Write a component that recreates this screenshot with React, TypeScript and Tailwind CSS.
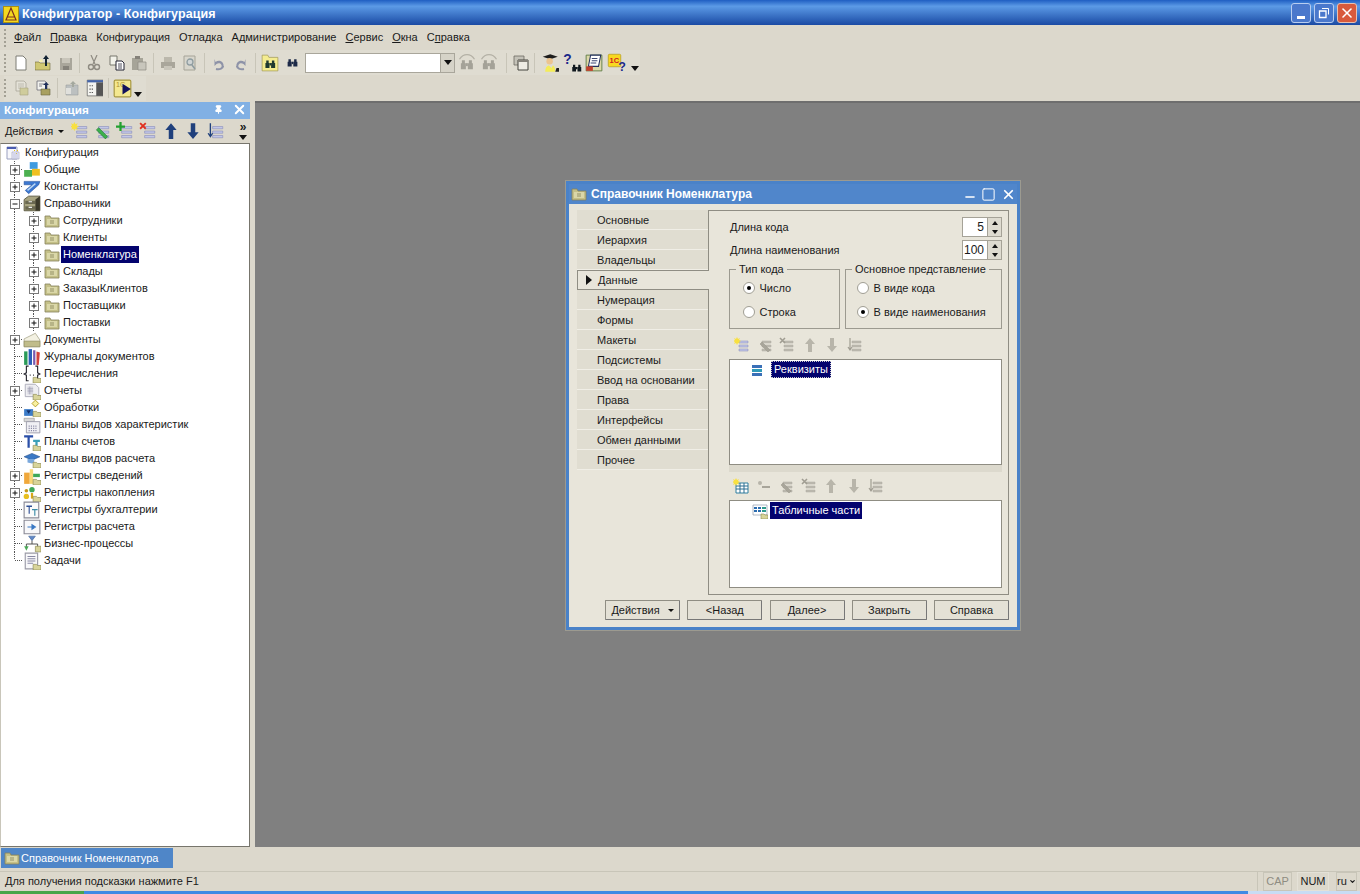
import React from "react";
import { ChevronDown, Minus, Pin, Square, X } from "lucide-react";

type IconProps = { children: React.ReactNode; size?: number };

const Ic = ({ children, size = 16 }: IconProps) => (
  <svg width={size} height={size} viewBox="0 0 16 16" className="shrink-0">
    {children}
  </svg>
);

// small olive folder that sits in the corner of the tree icons
const Corner = () => (
  <g>
    <path d="M9 11h3l1 1h3v4H9z" fill="#d8d49a" stroke="#8d8a52" strokeWidth=".6" />
  </g>
);

const FolderIcon = () => (
  <Ic>
    <path d="M1 3h5l1 2h8v9H1z" fill="#c4c088" stroke="#85825a" strokeWidth=".8" />
    <path d="M3 7h10M3 9h10M3 11h10" stroke="#f0eec8" strokeWidth="1" />
    <path d="M6 8h4M6 10h4" stroke="#77744c" strokeWidth=".7" />
  </Ic>
);

const RootIcon = () => (
  <Ic>
    <path d="M2 2h10v12H2z" fill="#f7f7fb" stroke="#9aa0c0" />
    <path d="M2 2h9v2H2z" fill="#4a5cb0" />
    <path d="M7 7h7v7H7z" fill="#eef" stroke="#a0a0b8" strokeWidth=".6" />
    <path d="M9 5h1v1H9zM12 5h1v1h-1zM11 8h1v1h-1z" fill="#e6c020" />
    <path d="M8 9h5M8 11h5M8 13h5" stroke="#b0b4cc" strokeWidth=".8" />
  </Ic>
);

const CommonIcon = () => (
  <Ic>
    <path d="M6 1h7v6H6z" fill="#3f9be0" />
    <path d="M8 7h7v6H8z" fill="#f0c020" />
    <path d="M1 8h7v6H1z" fill="#4cb050" />
  </Ic>
);

const ConstIcon = () => (
  <Ic>
    <path d="M1 3h14l-1 3-9 8-3-3 6-5H1z" fill="#3c78d0" stroke="#24509a" strokeWidth=".5" />
    <path d="M4 11l7-6" stroke="#bcd8f4" strokeWidth="1.2" />
  </Ic>
);

const CabinetIcon = () => (
  <Ic>
    <path d="M5 1h10v13H1V4z" fill="#a8a480" stroke="#57553c" strokeWidth=".8" />
    <path d="M2 5h9v3H2zM2 10h9v3H2z" fill="#6a6850" />
    <path d="M11 4l4-3v13l-4 0z" fill="#3c3a2a" />
    <path d="M5 6h3M5 11h3" stroke="#eee" />
  </Ic>
);

const DocsIcon = () => (
  <Ic>
    <path d="M1 7l10-5 4 6v6H1z" fill="#f3f1e2" stroke="#a8a68c" strokeWidth=".7" />
    <path d="M1 9h14v5H1z" fill="#c0bc8a" stroke="#8e8b5e" strokeWidth=".6" />
  </Ic>
);

const JournalIcon = () => (
  <Ic>
    <path d="M1 3h3v12H1z" fill="#2a9a58" />
    <path d="M5 1h3v14H5z" fill="#2c5fb8" />
    <path d="M9 2h2v13H9z" fill="#7a5ab0" />
    <path d="M12 3l3 1-1 11h-2z" fill="#d2423c" />
  </Ic>
);

const EnumIcon = () => (
  <Ic>
    <path d="M5 1H3v6L1 8l2 1v5h2M11 1h2v6l2 1-2 1v5h-2" fill="none" stroke="#26262e" strokeWidth="1" />
    <path d="M6 9h.8M9 9h.8" stroke="#26262e" />
    <Corner />
  </Ic>
);

const ReportIcon = () => (
  <Ic>
    <path d="M2 2h9l3 3v8H2z" fill="#eeeef2" stroke="#aaaab8" strokeWidth=".8" />
    <path d="M4 4h5v7H4z" fill="#d4d4de" />
    <path d="M4 6h5M4 8h5M6 4v7" stroke="#9a9aae" strokeWidth=".6" />
    <Corner />
  </Ic>
);

const ProcessIcon = () => (
  <Ic>
    <path d="M11 1l3 3-3 3-3-3z" fill="#f8f0a0" stroke="#b09820" strokeWidth=".8" />
    <path d="M1 9h8v6H1z" fill="#3c7cc8" />
    <path d="M3 10h4l-2 3z" fill="#14306a" />
    <Corner />
  </Ic>
);

const CharIcon = () => (
  <Ic>
    <path d="M1 2h9v3H1z" fill="#d8d8d8" stroke="#9a9a9a" strokeWidth=".6" />
    <path d="M3 5h12v10H3z" fill="#f0f0f4" stroke="#9a9aa8" strokeWidth=".8" />
    <path d="M5 9h8M5 11h8M5 13h8" stroke="#8a8aa6" strokeDasharray="1 1" />
  </Ic>
);

const AccountIcon = () => (
  <Ic>
    <path d="M1 2h8v2H6v9H4V4H1z" fill="#2a4fa8" />
    <path d="M9 6h6v2h-2v4h-2V8H9z" fill="#3ba0b8" />
    <Corner />
  </Ic>
);

const CalcPlanIcon = () => (
  <Ic>
    <path d="M1 6l7-3 7 3-7 3z" fill="#3a78c4" stroke="#1f4a8a" strokeWidth=".5" />
    <path d="M4 8v3l4 1 2-1V8" fill="#7aa8dc" />
    <Corner />
  </Ic>
);

const InfoRegIcon = () => (
  <Ic>
    <path d="M1 5h5v10H1z" fill="#f0a83c" />
    <path d="M6 2h3v13H6z" fill="#f8d878" />
    <path d="M9 6h6v3H9z" fill="#3ea858" />
    <Corner />
  </Ic>
);

const AccumRegIcon = () => (
  <Ic>
    <circle cx="3" cy="11" r="2.4" fill="#e8c020" />
    <circle cx="8" cy="5" r="2.4" fill="#3ea858" />
    <circle cx="3" cy="6" r="1.6" fill="#c89a18" />
    <path d="M7 8h2v5H7z" fill="#d8a818" />
    <Corner />
  </Ic>
);

const BookRegIcon = () => (
  <Ic>
    <path d="M1 1h13v14H1z" fill="#fafafa" stroke="#8a8a96" />
    <path d="M3 4h5v1.4H6v6H5v-6H3z" fill="#2e4f96" />
    <path d="M8 7h5v1.2h-2v5h-1v-5H8z" fill="#3a8aa6" />
  </Ic>
);

const CalcRegIcon = () => (
  <Ic>
    <path d="M1 2h14v12H1z" fill="#f8f8fa" stroke="#8a8a96" />
    <path d="M4 8h4M8 6l3 2-3 2z" stroke="#3a78c4" fill="#3a78c4" strokeWidth="1" />
  </Ic>
);

const BizIcon = () => (
  <Ic>
    <path d="M5 1h6l-3 4z" fill="#5f88c8" stroke="#3c5c90" strokeWidth=".5" />
    <path d="M8 5v3M3 11V8h10v3" fill="none" stroke="#444" strokeWidth=".8" />
    <path d="M1 10h4l-2 4z" fill="#4caa58" />
    <path d="M11 10h5v5h-5z" fill="#d8d49a" stroke="#8d8a52" strokeWidth=".6" />
  </Ic>
);

const TaskIcon = () => (
  <Ic>
    <path d="M2 1h11v14H2z" fill="#f8f8fa" stroke="#9a9aa6" />
    <path d="M4 4h7M4 6h7M4 8h7M4 10h5" stroke="#7c7c9a" strokeWidth=".8" />
    <Corner />
  </Ic>
);

// dotted connectors and the +/- box on the left of a tree row
const Guide = ({ kind }: { kind: "plus" | "minus" | "line" | "end" | "pass" }) => (
  <svg width="18" height="17" viewBox="0 0 18 17" className="shrink-0">
    {kind !== "end" ? (
      <path d="M9.5 0V17" stroke="#555" strokeDasharray="1 1" />
    ) : (
      <path d="M9.5 0V8" stroke="#555" strokeDasharray="1 1" />
    )}
    {kind !== "pass" && <path d="M10 8.5H18" stroke="#555" strokeDasharray="1 1" />}
    {(kind === "plus" || kind === "minus") && (
      <g>
        <rect x="5.5" y="4.5" width="9" height="9" fill="#fff" stroke="#7a7a7a" />
        <path d="M7.5 9h5" stroke="#111" />
        {kind === "plus" && <path d="M10 6.5v5" stroke="#111" />}
      </g>
    )}
  </svg>
);

type Node = {
  label: string;
  icon: React.ReactNode;
  kind: "plus" | "minus" | "line" | "end";
  child?: boolean;
  selected?: boolean;
};

const treeNodes: Node[] = [
  { label: "Общие", icon: <CommonIcon />, kind: "plus" },
  { label: "Константы", icon: <ConstIcon />, kind: "plus" },
  { label: "Справочники", icon: <CabinetIcon />, kind: "minus" },
  { label: "Сотрудники", icon: <FolderIcon />, kind: "plus", child: true },
  { label: "Клиенты", icon: <FolderIcon />, kind: "plus", child: true },
  { label: "Номенклатура", icon: <FolderIcon />, kind: "plus", child: true, selected: true },
  { label: "Склады", icon: <FolderIcon />, kind: "plus", child: true },
  { label: "ЗаказыКлиентов", icon: <FolderIcon />, kind: "plus", child: true },
  { label: "Поставщики", icon: <FolderIcon />, kind: "plus", child: true },
  { label: "Поставки", icon: <FolderIcon />, kind: "plus", child: true },
  { label: "Документы", icon: <DocsIcon />, kind: "plus" },
  { label: "Журналы документов", icon: <JournalIcon />, kind: "line" },
  { label: "Перечисления", icon: <EnumIcon />, kind: "line" },
  { label: "Отчеты", icon: <ReportIcon />, kind: "plus" },
  { label: "Обработки", icon: <ProcessIcon />, kind: "line" },
  { label: "Планы видов характеристик", icon: <CharIcon />, kind: "line" },
  { label: "Планы счетов", icon: <AccountIcon />, kind: "line" },
  { label: "Планы видов расчета", icon: <CalcPlanIcon />, kind: "line" },
  { label: "Регистры сведений", icon: <InfoRegIcon />, kind: "plus" },
  { label: "Регистры накопления", icon: <AccumRegIcon />, kind: "plus" },
  { label: "Регистры бухгалтерии", icon: <BookRegIcon />, kind: "line" },
  { label: "Регистры расчета", icon: <CalcRegIcon />, kind: "line" },
  { label: "Бизнес-процессы", icon: <BizIcon />, kind: "line" },
  { label: "Задачи", icon: <TaskIcon />, kind: "end" },
];

// stacked list rows used by the panel and dialog toolbars
const Lines = ({ off }: { off?: boolean }) => (
  <path
    d="M5 4h9v2H5zM5 8h9v2H5zM5 12h9v2H5z"
    fill={off ? "#bdbab0" : "#c2c6e8"}
    stroke={off ? "#aeaba0" : "#8488b8"}
    strokeWidth=".5"
  />
);

const AddIcon = ({ off }: { off?: boolean }) => (
  <Ic>
    <Lines off={off} />
    <path d="M3 0l1 2 2-1-1 2 2 1-2 1 1 2-2-1-1 2-1-2-2 1 1-2-2-1 2-1-1-2 2 1z" fill="#f8e040" />
  </Ic>
);

const EditIcon = ({ off }: { off?: boolean }) => (
  <Ic>
    <Lines off={off} />
    <path d="M5 5l8 8-2 2-8-8z" fill={off ? "#a8a59a" : "#3cb04c"} stroke={off ? "#989588" : "#1c7030"} strokeWidth=".5" />
  </Ic>
);

const PlusListIcon = () => (
  <Ic>
    <Lines />
    <path d="M3 0h2v3h3v2H5v3H3V5H0V3h3z" fill="#22a030" />
  </Ic>
);

const DelIcon = ({ off }: { off?: boolean }) => (
  <Ic>
    <Lines off={off} />
    <path d="M1 1l5 5M6 1L1 6" stroke={off ? "#a09d92" : "#e03020"} strokeWidth="1.6" />
  </Ic>
);

const UpIcon = ({ off }: { off?: boolean }) => (
  <Ic>
    <path d="M8 1l5 6h-3v8H6V7H3z" fill={off ? "#b8b5aa" : "#20407c"} />
  </Ic>
);

const DownIcon = ({ off }: { off?: boolean }) => (
  <Ic>
    <path d="M8 15l5-6h-3V1H6v8H3z" fill={off ? "#b8b5aa" : "#20407c"} />
  </Ic>
);

const SortIcon = ({ off }: { off?: boolean }) => (
  <Ic>
    <Lines off={off} />
    <path d="M3 1v11M1 10l2 3 2-3" fill="none" stroke={off ? "#a09d92" : "#20407c"} strokeWidth="1.2" />
  </Ic>
);

const Binoculars = ({ color = "#26323c" }: { color?: string }) => (
  <g fill={color}>
    <path d="M3 4h3v3h1v6H2V7h1zM10 4h3v3h1v6H9V7h1z" />
    <path d="M7 7h2v3H7z" />
  </g>
);

const gray = "#a9a69b";

const toolbarIcons: Record<string, React.ReactNode> = {
  new: (
    <Ic>
      <path d="M3 1h7l3 3v11H3z" fill="#fff" stroke="#7c7c74" />
    </Ic>
  ),
  open: (
    <Ic>
      <path d="M0 7h4l1 1h10v7H0z" fill="#cfc772" stroke="#6e6a3c" strokeWidth=".6" />
      <path d="M0 7h4V5l3-1 1 3z" fill="#f4eeb0" />
      <path d="M11 0l3 4h-2v7h-2V4H8z" fill="#123" />
    </Ic>
  ),
  save: (
    <Ic>
      <path d="M2 3h12v12H2z" fill={gray} />
      <path d="M4 3h8v5H4z" fill="#c8c5ba" />
      <path d="M5 11h6v4H5z" fill="#85827a" />
    </Ic>
  ),
  cut: (
    <Ic>
      <path d="M5 0l4 9M11 0L7 9" stroke="#8e8b82" strokeWidth="1.2" />
      <circle cx="5" cy="12" r="2.5" fill="none" stroke="#8e8b82" strokeWidth="1.4" />
      <circle cx="11" cy="12" r="2.5" fill="none" stroke="#8e8b82" strokeWidth="1.4" />
    </Ic>
  ),
  copy: (
    <Ic>
      <path d="M1 1h7v9H1z" fill="#f2f2ea" stroke="#77776c" />
      <path d="M7 6h6l2 2v7H7z" fill="#fff" stroke="#223" />
      <path d="M9 9h4M9 11h4M9 13h4" stroke="#223" strokeWidth=".8" />
    </Ic>
  ),
  paste: (
    <Ic>
      <path d="M1 3h11v12H1z" fill="#a6a498" />
      <path d="M4 1h5v3H4z" fill="#85827a" />
      <path d="M7 7h8v8H7z" fill="#c8c6bc" stroke="#8e8b82" strokeWidth=".7" />
    </Ic>
  ),
  print: (
    <Ic>
      <path d="M4 2h8v5H4z" fill="#bbb8ac" />
      <path d="M1 7h14v6H1z" fill={gray} />
      <path d="M4 11h8v4H4z" fill="#c8c5ba" />
    </Ic>
  ),
  preview: (
    <Ic>
      <path d="M2 1h11v14H2z" fill="#d8d6cc" stroke="#a6a498" />
      <circle cx="8" cy="7" r="3" fill="#cfd4d4" stroke="#8e9ca0" strokeWidth="1.3" />
      <path d="M10 10l3 4" stroke="#8e9ca0" strokeWidth="1.6" />
    </Ic>
  ),
  undo: (
    <Ic>
      <path d="M4 3v7l2-2c3-2 6 0 5 4l2-1c1-5-4-8-8-5L4 3z" fill="#8e93a8" transform="translate(-.5 1)" />
      <path d="M5 14c4 1 7-1 7-3" stroke="#8e93a8" strokeWidth="2" fill="none" />
    </Ic>
  ),
  redo: (
    <Ic>
      <path d="M12 3v7l-2-2c-3-2-6 0-5 4l-2-1c-1-5 4-8 8-5l1-3z" fill="#8e93a8" transform="translate(.5 1)" />
      <path d="M11 14c-4 1-7-1-7-3" stroke="#8e93a8" strokeWidth="2" fill="none" />
    </Ic>
  ),
  find: (
    <Ic size={18}>
      <path d="M1 1h5l1 2h8v12H1z" fill="#f4ec90" stroke="#9c9450" strokeWidth=".6" />
      <g transform="translate(2.5 3) scale(.72)">
        <Binoculars color="#1f3a30" />
      </g>
    </Ic>
  ),
  bino: (
    <Ic size={13}>
      <Binoculars color="#1d2a48" />
    </Ic>
  ),
  nextB: (
    <Ic size={20}>
      <path d="M2 5c3-5 9-5 12 0" fill="none" stroke="#b4b1a6" />
      <g transform="translate(1.5 2.5) scale(.8)">
        <Binoculars color="#a4a298" />
      </g>
    </Ic>
  ),
  win: (
    <Ic>
      <path d="M1 1h10v9H1z" fill="#c4c2b8" stroke="#6c6a62" strokeWidth=".8" />
      <path d="M5 5h10v10H5z" fill="#eeece4" stroke="#44443e" />
      <path d="M5 5h10v2H5z" fill="#85827a" />
    </Ic>
  ),
  prof: (
    <Ic size={20}>
      <path d="M3 3l6-2 6 2-6 2z" fill="#1e1e1e" />
      <circle cx="8.5" cy="6.5" r="2.6" fill="#ecc490" />
      <path d="M5 15c0-4 2-5 3-5l2 2 1-2c1 0 2 2 2 5z" fill="#f4ec58" />
      <path d="M13 15h3v-3h-2z" fill="#222" />
    </Ic>
  ),
  helpFind: (
    <Ic size={20}>
      <text x="1" y="9" fontSize="11" fontWeight="700" fill="#1c2a8a" fontFamily="Liberation Sans">?</text>
      <g transform="translate(7 7) scale(.6)">
        <Binoculars color="#10181e" />
      </g>
    </Ic>
  ),
  book: (
    <Ic size={18}>
      <path d="M1 1h14v14H1z" fill="#dcd8a8" stroke="#5c7a44" strokeWidth=".8" />
      <path d="M5 1h9l-2 10H3z" fill="#fff" stroke="#233060" strokeWidth=".9" />
      <path d="M6 4h5M6 6h5M5 8h5" stroke="#233060" strokeWidth=".8" />
      <path d="M1 11h6v4H1z" fill="#c0402c" />
    </Ic>
  ),
  oneC: (
    <Ic size={20}>
      <rect x="1" y="1" width="10" height="10" rx="1" fill="#f8d820" stroke="#a89018" strokeWidth=".5" />
      <text x="2" y="8" fontSize="6" fontWeight="700" fill="#d02020" fontFamily="Liberation Sans">1C</text>
      <text x="9" y="14" fontSize="10" fontWeight="700" fill="#1c2a8a" fontFamily="Liberation Sans">?</text>
    </Ic>
  ),
  t1: (
    <Ic>
      <path d="M3 1h8l2 2v8H3z" fill="#e4e2d8" stroke="#a8a69a" strokeWidth=".8" />
      <path d="M5 4h6M5 6h6M5 8h3" stroke="#b4b2a6" strokeWidth=".8" />
      <path d="M7 8h8v7H7z" fill="#cfcc9c" stroke="#a4a280" strokeWidth=".6" />
    </Ic>
  ),
  t2: (
    <Ic>
      <path d="M2 1h8l2 2v7H2z" fill="#f2f2ee" stroke="#6c6c76" strokeWidth=".8" />
      <path d="M4 4h5M4 6h3" stroke="#6c6c76" strokeWidth=".8" />
      <path d="M6 9h9v6H6z" fill="#a8a060" stroke="#6a6640" strokeWidth=".6" />
      <path d="M11 2l3 3h-2v4h-2V5H8z" fill="#20305c" />
    </Ic>
  ),
  t3: (
    <Ic>
      <path d="M2 5h12v10H2z" fill="#bcc0c0" stroke="#9a9e9e" strokeWidth=".6" />
      <path d="M2 8h5v6H2z" fill="#e0e0dc" />
      <path d="M9 1l3 3h-2v3H8V4H6z" fill="#a4a89e" />
    </Ic>
  ),
  t4: (
    <Ic size={18}>
      <path d="M2 1h14v14H2z" fill="#f4f4f0" stroke="#555" strokeWidth=".6" />
      <path d="M2 1h14v2H2z" fill="#4464a8" />
      <path d="M10 3h6v12h-6z" fill="#555" />
      <path d="M4 6h4M4 9h4M4 12h4" stroke="#444" strokeDasharray="1 1" />
    </Ic>
  ),
  run: (
    <Ic size={19}>
      <rect x="1" y="1" width="14" height="14" rx="1" fill="#f4e890" stroke="#a89840" />
      <text x="2.5" y="7" fontSize="6" fill="#b09030" fontFamily="Liberation Sans">1C</text>
      <path d="M8 4l7 4.5-7 4.5z" fill="#14145c" />
    </Ic>
  ),
};

const Grip = () => (
  <div className="w-[3px] h-[18px] border-l-2 border-dotted border-[#a3a094] shrink-0" />
);

const Sep = () => <div className="w-px h-[20px] mx-[2.5px] bg-[#c8c5b8] shrink-0" />;

const Tool = ({ name }: { name: string }) => (
  <div className="w-[22.5px] h-[24px] flex items-center justify-center shrink-0">{toolbarIcons[name]}</div>
);

const TinyArrow = () => (
  <svg width="8" height="5" viewBox="0 0 8 5" className="shrink-0">
    <path d="M0 0h8L4 5z" fill="#111" />
  </svg>
);

const PanelTool = ({ children }: { children: React.ReactNode }) => (
  <div className="w-[22.75px] flex justify-center [&>svg]:w-[18px] [&>svg]:h-[18px]">{children}</div>
);

const DlgTool = ({ children }: { children: React.ReactNode }) => (
  <div className="w-[22.5px] flex justify-center">{children}</div>
);

const menus: [string, string, string][] = [
  ["", "Ф", "айл"],
  ["", "П", "равка"],
  ["Конфигурация", "", ""],
  ["Отладка", "", ""],
  ["Администрирование", "", ""],
  ["", "С", "ервис"],
  ["", "О", "кна"],
  ["С", "п", "равка"],
];

const sections = [
  "Основные",
  "Иерархия",
  "Владельцы",
  "Данные",
  "Нумерация",
  "Формы",
  "Макеты",
  "Подсистемы",
  "Ввод на основании",
  "Права",
  "Интерфейсы",
  "Обмен данными",
  "Прочее",
];

const Spin = ({ value }: { value: string }) => (
  <div className="w-[40px] h-[20px] flex border border-[#a5a297] bg-white">
    <div className="flex-1 flex items-center justify-end pr-[3px] text-[12px]">{value}</div>
    <div className="w-[14px] flex flex-col bg-[#dedbd0] border-l border-[#a5a297]">
      <div className="flex-1 flex items-center justify-center">
        <svg width="6" height="4" viewBox="0 0 6 4">
          <path d="M0 4h6L3 0z" fill="#111" />
        </svg>
      </div>
      <div className="flex-1 flex items-center justify-center">
        <svg width="6" height="4" viewBox="0 0 6 4">
          <path d="M0 0h6L3 4z" fill="#111" />
        </svg>
      </div>
    </div>
  </div>
);

const Radio = ({ label, checked }: { label: string; checked?: boolean }) => (
  <div className="flex items-center h-[24px]">
    <div className="w-[12px] h-[12px] rounded-full bg-white border border-[#a09e94] flex items-center justify-center shrink-0">
      {checked && <div className="w-[4px] h-[4px] rounded-full bg-black" />}
    </div>
    <span className="ml-[4.5px]">{label}</span>
  </div>
);

const Group = ({ title, className, children }: { title: string; className: string; children: React.ReactNode }) => (
  <div className={"relative h-[60px] border border-[#9c9a90] pt-[6px] " + className}>
    <span className="absolute -top-[8px] left-[6px] px-[3px] bg-[#e8e5da] leading-[14px]">{title}</span>
    {children}
  </div>
);

const DlgButton = ({ label, arrow }: { label: string; arrow?: boolean }) => (
  <div className="w-[75px] h-[20px] flex items-center justify-center gap-[8px] bg-[#e4e1d6] border border-[#8f8d83] border-b-[#777] border-r-[#777] rounded-[1px]">
    <span>{label}</span>
    {arrow && (
      <svg width="6" height="3" viewBox="0 0 6 3">
        <path d="M0 0h6L3 3z" fill="#111" />
      </svg>
    )}
  </div>
);

const Picked = ({ label, dotted }: { label: string; dotted?: boolean }) => (
  <span
    className={
      "h-[17px] px-[2px] flex items-center bg-[#03036e] text-white " + (dotted ? "border border-dotted border-[#c8c8c8]" : "")
    }
  >
    {label}
  </span>
);

export default function App() {
  return (
    <div className="h-[894px] w-[1360px] overflow-hidden flex flex-col bg-[#dcd8cc] text-[11px] text-[#1a1a1a] font-['Liberation_Sans',sans-serif]">
      {/* title bar */}
      <div className="h-[25px] shrink-0 flex items-center pl-[3px] pr-[3px] bg-gradient-to-b from-[#1f5ec2] via-[#5c9ae6] via-25% to-[#1b4aa4]">
        <svg width="16" height="17" viewBox="0 0 16 17" className="shrink-0 mt-[3px]">
          <rect x=".5" y=".5" width="15" height="16" fill="#f4d820" stroke="#a89018" />
          <path d="M8 2L3 14h10zM4 11h8" fill="none" stroke="#7a3020" strokeWidth="1.2" />
        </svg>
        <span className="ml-[3px] mt-[3px] text-[12.5px] font-bold text-white tracking-[0.1px]">Конфигуратор - Конфигурация</span>
        <div className="ml-auto flex gap-[3px]">
          <div className="w-[20px] h-[20px] rounded-[3px] border border-[#b8cdf0] bg-[#4a78cc] flex items-end justify-center pb-[3px]">
            <div className="w-[8px] h-[3px] bg-white" />
          </div>
          <div className="w-[20px] h-[20px] rounded-[3px] border border-[#b8cdf0] bg-[#4a78cc] flex items-center justify-center">
            <svg width="12" height="12" viewBox="0 0 12 12">
              <path d="M4 1.5h6.5v6" fill="none" stroke="#fff" />
              <path d="M1.5 4h6.5v6.5H1.5z" fill="none" stroke="#fff" strokeWidth="1.3" />
            </svg>
          </div>
          <div className="w-[20px] h-[20px] rounded-[3px] border border-[#e8c0b0] bg-[#d85a3c] flex items-center justify-center">
            <X size={16} strokeWidth={2.4} color="#fff" />
          </div>
        </div>
      </div>

      {/* menu */}
      <div className="h-[25px] shrink-0 flex items-center pl-[4px]">
        <Grip />
        <div className="flex gap-[9px] ml-[7px]">
          {menus.map(([a, b, c]) => (
            <span key={a + b + c}>
              {a}
              {b && <span className="underline">{b}</span>}
              {c}
            </span>
          ))}
        </div>
      </div>

      {/* toolbars */}
      <div className="h-[25px] shrink-0 flex items-center pl-[4px] w-[640px] bg-[#dfdcd1]">
        <Grip />
        <div className="w-[2.25px] shrink-0" />
        <Tool name="new" />
        <Tool name="open" />
        <Tool name="save" />
        <Sep />
        <Tool name="cut" />
        <Tool name="copy" />
        <Tool name="paste" />
        <Sep />
        <Tool name="print" />
        <Tool name="preview" />
        <Sep />
        <Tool name="undo" />
        <Tool name="redo" />
        <Sep />
        <Tool name="find" />
        <Tool name="bino" />
        <div className="ml-[2px] w-[150px] h-[20px] flex shrink-0 border border-[#a9a69b] bg-white">
          <div className="flex-1" />
          <div className="w-[14px] flex items-center justify-center bg-[#d6d3c8] border-l border-[#a9a69b]">
            <TinyArrow />
          </div>
        </div>
        <Tool name="nextB" />
        <Tool name="nextB" />
        <div className="w-[3px] shrink-0" />
        <Sep />
        <Tool name="win" />
        <Sep />
        <Tool name="prof" />
        <Tool name="helpFind" />
        <Tool name="book" />
        <Tool name="oneC" />
        <div className="mt-[12px] ml-[3px]">
          <TinyArrow />
        </div>
      </div>
      <div className="h-[26px] shrink-0 flex items-center pl-[4px]">
        <div className="h-[25px] flex items-center bg-[#dfdcd1] pr-[4px]">
          <Grip />
          <div className="w-[2.25px] shrink-0" />
          <Tool name="t1" />
          <Tool name="t2" />
          <Sep />
          <Tool name="t3" />
          <Tool name="t4" />
          <Sep />
          <Tool name="run" />
          <div className="mt-[12px]">
            <TinyArrow />
          </div>
        </div>
      </div>

      {/* work area */}
      <div className="flex-1 min-h-0 flex">
        <div className="w-[250px] shrink-0 flex flex-col">
          <div className="h-[17px] mt-px shrink-0 flex items-center pl-[4px] pr-[3px] pb-[2px] bg-[#81b0e4] text-white font-bold text-[11.7px]">
            <span>Конфигурация</span>
            <Pin size={9} strokeWidth={3} className="ml-auto mr-[9px]" fill="#fff" />
            <X size={15} strokeWidth={3} />
          </div>
          <div className="h-[24px] shrink-0 flex items-center pl-[5px]">
            <span>Действия</span>
            <svg width="6" height="3" viewBox="0 0 6 3" className="ml-[5px] mr-[4px]">
              <path d="M0 0h6L3 3z" fill="#111" />
            </svg>
            <PanelTool><AddIcon /></PanelTool>
            <PanelTool><EditIcon /></PanelTool>
            <PanelTool><PlusListIcon /></PanelTool>
            <PanelTool><DelIcon /></PanelTool>
            <PanelTool><UpIcon /></PanelTool>
            <PanelTool><DownIcon /></PanelTool>
            <PanelTool><SortIcon /></PanelTool>
            <div className="ml-auto mr-[3px] flex flex-col items-center gap-[4px]">
              <span className="leading-[8px] text-[12px] font-bold">»</span>
              <TinyArrow />
            </div>
          </div>
          <div className="flex-1 min-h-0 bg-white border border-[#77756c] border-l-[#c9c6ba]">
            <div className="h-[17px] flex items-center pl-[4px]">
              <RootIcon />
              <span className="ml-[4px]">Конфигурация</span>
            </div>
            {treeNodes.map((n) => (
              <div key={n.label} className="h-[17px] flex items-center pl-[4px]">
                {n.child && <Guide kind="pass" />}
                {n.child && <div className="w-px shrink-0" />}
                <Guide kind={n.kind} />
                {n.child ? <div className="w-[2px] shrink-0" /> : null}
                <div className={n.child ? "" : "[&>svg]:w-[18px] [&>svg]:h-[18px] -my-px"}>{n.icon}</div>
                <div className="ml-[3px]">
                  {n.selected ? (
                    <div className="-ml-[2px]">
                      <Picked label={n.label} />
                    </div>
                  ) : (
                    <span>{n.label}</span>
                  )}
                </div>
              </div>
            ))}
          </div>
        </div>

        <div className="w-[5px] shrink-0" />

        {/* mdi client */}
        <div className="relative flex-1 min-w-0 bg-[#808080] border-t-2 border-[#6e6e6e]">
          <div className="absolute left-[311px] top-[78px] w-[454px] h-[449px] flex flex-col border-[3px] border-[#4a82c8] outline outline-1 outline-[#9c9a90] bg-[#e8e5da]">
            <div className="h-[20px] shrink-0 flex items-center pl-[2px] pr-[1px] bg-[#5086cb] text-white font-bold text-[12px]">
              <FolderIcon />
              <span className="ml-[4px]">Справочник Номенклатура</span>
              <Minus size={14} strokeWidth={2.6} className="ml-auto mt-[5px]" />
              <Square size={15} strokeWidth={1.6} className="ml-[4px]" />
              <X size={15} strokeWidth={2.8} className="ml-[5px]" />
            </div>
            <div className="flex-1 min-h-0 flex flex-col px-[8px] pt-[6px] pb-[6px]">
              <div className="flex-1 min-h-0 flex">
                <div className="w-[131px] shrink-0 flex flex-col">
                  {sections.map((s) =>
                    s === "Данные" ? (
                      <div
                        key={s}
                        className="h-[20px] flex items-center pl-[8px] border-l border-t border-b border-[#8f8d83] relative z-10 -mr-px bg-[#e8e5da]"
                      >
                        <svg width="6" height="10" viewBox="0 0 6 10" className="mr-[6px]">
                          <path d="M0 0l6 5-6 5z" fill="#111" />
                        </svg>
                        <span>{s}</span>
                      </div>
                    ) : (
                      <div key={s} className="h-[20px] pt-px flex items-center pl-[20px] bg-[#e0ddd1] border-b border-[#f0eee6]">
                        {s}
                      </div>
                    )
                  )}
                </div>
                <div className="flex-1 min-w-0 border border-[#8f8d83] pl-[20px] pr-[6px] pt-[6px] flex flex-col">
                  <div className="flex items-center justify-between h-[20px]">
                    <span className="ml-px">Длина кода</span>
                    <Spin value="5" />
                  </div>
                  <div className="flex items-center justify-between h-[20px] mt-[3px]">
                    <span className="ml-px">Длина наименования</span>
                    <Spin value="100" />
                  </div>
                  <div className="flex gap-[5px] mt-[9px]">
                    <Group title="Тип кода" className="w-[111px] pl-[13px]">
                      <Radio label="Число" checked />
                      <Radio label="Строка" />
                    </Group>
                    <Group title="Основное представление" className="flex-1 pl-[11px]">
                      <Radio label="В виде кода" />
                      <Radio label="В виде наименования" checked />
                    </Group>
                  </div>
                  <div className="h-[30px] flex items-center shrink-0 pl-[2px] pt-[2px]">
                    <DlgTool><AddIcon /></DlgTool>
                    <DlgTool><EditIcon off /></DlgTool>
                    <DlgTool><DelIcon off /></DlgTool>
                    <DlgTool><UpIcon off /></DlgTool>
                    <DlgTool><DownIcon off /></DlgTool>
                    <DlgTool><SortIcon off /></DlgTool>
                  </div>
                  <div className="h-[106px] shrink-0 bg-white border border-[#8f8d83] flex pl-[20px] pt-px">
                    <div className="h-[17px] flex items-center">
                      <svg width="14" height="14" viewBox="0 0 14 14">
                        <path d="M2 2h10v3H2z" fill="#3a70b8" />
                        <path d="M2 6h10v3H2z" fill="#2f9ab8" />
                        <path d="M2 10h10v3H2z" fill="#3a70b8" />
                      </svg>
                      <div className="ml-[7px]">
                        <Picked label="Реквизиты" dotted />
                      </div>
                    </div>
                  </div>
                  <div className="h-[7px] shrink-0 bg-[#dcd9cd]" />
                  <div className="h-[28px] flex items-center shrink-0 pl-px">
                    <DlgTool>
                      <Ic>
                        <path d="M3 5h12v10H3z" fill="#fff" stroke="#2e7ea0" />
                        <path d="M3 8h12M3 11h12M7 5v10M11 5v10" stroke="#2a6c90" />
                        <path d="M3 0l1 2 2-1-1 2 2 1-2 1 1 2-2-1-1 2-1-2-2 1 1-2-2-1 2-1-1-2 2 1z" fill="#f8e040" />
                      </Ic>
                    </DlgTool>
                    <DlgTool>
                      <Ic>
                        <circle cx="4" cy="5" r="2" fill="#b8b5aa" />
                        <path d="M6 8h8v2H6z" fill="#a8a59a" />
                      </Ic>
                    </DlgTool>
                    <DlgTool><EditIcon off /></DlgTool>
                    <DlgTool><DelIcon off /></DlgTool>
                    <DlgTool><UpIcon off /></DlgTool>
                    <DlgTool><DownIcon off /></DlgTool>
                    <DlgTool><SortIcon off /></DlgTool>
                  </div>
                  <div className="h-[88px] shrink-0 bg-white border border-[#8f8d83] flex pl-[22px] pt-px">
                    <div className="h-[17px] flex items-center">
                      <Ic>
                        <path d="M1 2h14v10H1z" fill="#fff" stroke="#7c8aa0" strokeWidth=".6" />
                        <path d="M2 4h3v2H2zM6 4h3v2H6zM2 7h3v2H2zM6 7h3v2H6z" fill="#2a6cb0" />
                        <path d="M10 4h4v2h-4zM10 7h4v2h-4z" fill="#2e9a8c" />
                        <Corner />
                      </Ic>
                      <div className="ml-[2px]">
                        <Picked label="Табличные части" />
                      </div>
                    </div>
                  </div>
                </div>
              </div>
              <div className="h-[26px] shrink-0 flex items-end justify-end gap-[7.25px] pb-px">
                <DlgButton label="Действия" arrow />
                <DlgButton label="<Назад" />
                <DlgButton label="Далее>" />
                <DlgButton label="Закрыть" />
                <DlgButton label="Справка" />
              </div>
            </div>
          </div>
        </div>
      </div>

      {/* window list */}
      <div className="h-[24px] shrink-0 flex items-start pt-[1px] pl-px">
        <div className="w-[172px] h-[20px] flex items-center pl-[3px] bg-[#4f86c8] text-white">
          <FolderIcon />
          <span className="ml-[1px]">Справочник Номенклатура</span>
        </div>
      </div>

      {/* status bar */}
      <div className="h-[20px] shrink-0 flex items-stretch pr-[3px] border-t border-[#c8c5b8]">
        <div className="flex-1 flex items-center pl-[5px] border-r border-[#c8c5b8]">Для получения подсказки нажмите F1</div>
        <div className="w-[29px] ml-[5px] flex items-center justify-center border border-[#c8c5b8] text-[#8e8c82]">CAP</div>
        <div className="w-[32px] ml-[5px] flex items-center justify-center border border-[#e4e1d7]">NUM</div>
        <div className="w-[21px] ml-[7px] flex items-center justify-center gap-[2px] border border-[#c8c5b8]">
          ru
          <ChevronDown size={7} strokeWidth={4} />
        </div>
      </div>

      {/* bit of the desktop taskbar below the window */}
      <div className="h-[3px] shrink-0 flex">
        <div className="w-[84px] bg-[#49a54b]" />
        <div className="flex-1 bg-[#3f8ae4]" />
        <div className="w-[112px] bg-[#c8dcf4]" />
      </div>
    </div>
  );
}
